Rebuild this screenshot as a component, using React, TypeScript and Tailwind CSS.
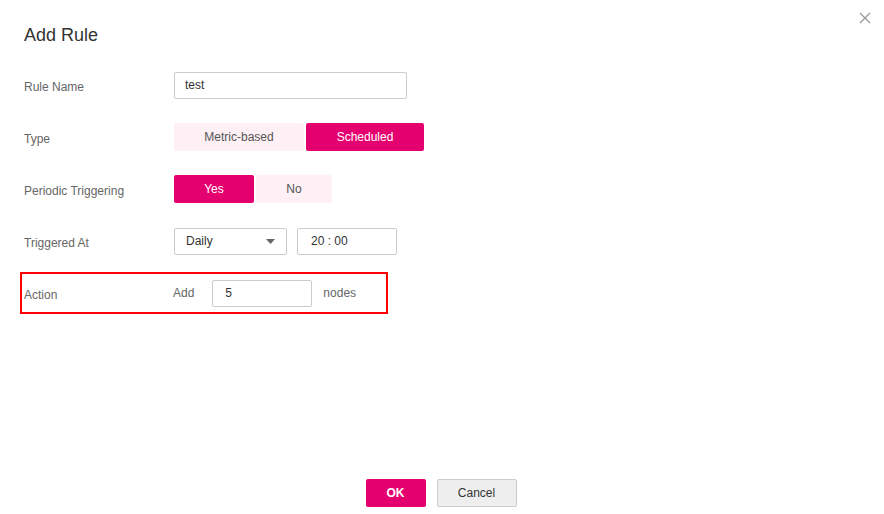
import React from "react";

function Field({ label, children }: { label: string; children: React.ReactNode }) {
    return (
        <div className="flex items-center h-7">
            <div className="w-[150px] pt-[3px] text-[12px] text-[#666]">{label}</div>
            {children}
        </div>
    );
}

function Segment({ options, active, widths }: { options: string[]; active: number; widths: string[] }) {
    return (
        <div className="flex gap-[2px] h-7">
            {options.map((opt, i) => (
                <div
                    key={opt}
                    className={
                        (i === active ? "bg-[#e4006f] text-white " : "bg-[#fff0f6] text-[#555] ") +
                        widths[i] +
                        " flex items-center justify-center text-[12px] rounded-[2px]"
                    }
                >
                    {opt}
                </div>
            ))}
        </div>
    );
}

export default function App() {
    return (
        <div
            className="relative w-[884px] h-[514px] bg-white flex flex-col"
            style={{ fontFamily: '"Liberation Sans", Arial, sans-serif' }}
        >
            {/* close */}
            <button className="absolute right-[13px] top-[12px] w-[12px] h-[12px] text-[#999]">
                <svg viewBox="0 0 12 12" width="12" height="12" stroke="currentColor" strokeWidth="1.3">
                    <path d="M1 1L11 11M11 1L1 11" />
                </svg>
            </button>

            <div className="px-6 pt-[24px] text-[18px] text-[#333] leading-[22px]">Add Rule</div>

            <div className="flex flex-col gap-6 px-6 mt-[25px]">
                <Field label="Rule Name">
                    <input
                        defaultValue="test"
                        className="w-[233px] h-[27px] border border-[#ccc] rounded-[2px] px-[10px] text-[12px] text-[#333] outline-none"
                    />
                </Field>

                <Field label="Type">
                    <Segment options={["Metric-based", "Scheduled"]} active={1} widths={["w-[130px]", "w-[118px]"]} />
                </Field>

                <Field label="Periodic Triggering">
                    <Segment options={["Yes", "No"]} active={0} widths={["w-[80px]", "w-[76px]"]} />
                </Field>

                <Field label="Triggered At">
                    <div className="flex gap-[10px]">
                        <div className="w-[113px] h-[27px] border border-[#ccc] rounded-[2px] pl-[11px] pr-[11px] flex items-center justify-between text-[12px] text-[#333]">
                            <span>Daily</span>
                            <svg width="9" height="5" viewBox="0 0 9 5">
                                <path d="M0 0H9L4.5 5Z" fill="#666" />
                            </svg>
                        </div>
                        <div className="w-[100px] h-[27px] border border-[#ccc] rounded-[2px] pl-[13px] flex items-center text-[12px] text-[#333]">
                            20 : 00
                        </div>
                    </div>
                </Field>

                <div className="relative flex items-center h-7">
                    <div className="absolute left-[-4px] top-[-7px] w-[368px] h-[42px] border-2 border-[#f00]" />
                    <div className="w-[149px] pt-[3px] text-[12px] text-[#666]">Action</div>
                    <span className="text-[12px] text-[#666]">Add</span>
                    <input
                        defaultValue="5"
                        className="ml-[18px] w-[100px] h-[27px] border border-[#ccc] rounded-[2px] px-[12px] text-[12px] text-[#333] outline-none"
                    />
                    <span className="ml-[11px] text-[12px] text-[#666]">nodes</span>
                </div>
            </div>

            <div className="mt-auto mb-[7px] pr-[2px] flex justify-center gap-[11px]">
                <button className="w-[60px] h-[28px] bg-[#e4006f] text-white text-[12px] font-bold rounded-[2px]">
                    OK
                </button>
                <button className="w-[80px] h-[28px] bg-[#eee] border border-[#ccc] text-[#333] text-[12px] rounded-[2px]">
                    Cancel
                </button>
            </div>
        </div>
    );
}
